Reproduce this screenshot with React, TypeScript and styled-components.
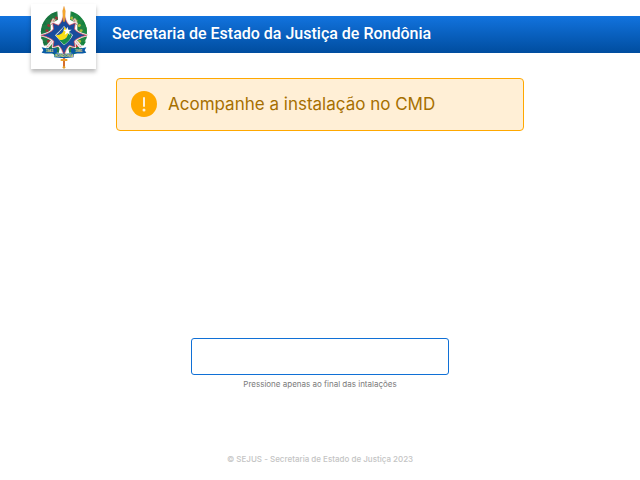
import React from "react";
import styled, { createGlobalStyle } from "styled-components";

const GlobalStyle = createGlobalStyle`
  *, *::before, *::after { box-sizing: border-box; }
  body { margin: 0; background: #fff; }
`;

const Page = styled.div`
  display: flex;
  flex-direction: column;
  min-height: 100vh;
  padding: 16px 0;
  font-family: Inter, sans-serif;
`;

const Header = styled.header`
  display: flex;
  align-items: center;
  gap: 16px;
  height: 37px;
  padding-left: 31px;
  background: linear-gradient(#1273de, #004d9f);
`;

const LogoCard = styled.div`
  display: flex;
  flex: none;
  align-items: center;
  justify-content: center;
  width: 65px;
  height: 65px;
  margin: -14px 0 -18px;
  background: #fff;
  box-shadow: 0 3px 4px rgba(0, 0, 0, 0.28);
`;

const Title = styled.h1`
  margin: 0;
  padding-bottom: 2px;
  color: #fff;
  font: 500 16px/20px Roboto, sans-serif;
`;

const Main = styled.main`
  display: flex;
  flex: 1;
  flex-direction: column;
  align-items: center;
  justify-content: space-between;
  padding: 25px 116px 0;
`;

const Alert = styled.div`
  display: flex;
  align-items: center;
  gap: 11px;
  align-self: stretch;
  min-height: 53px;
  padding: 0 14px 1px;
  border: 1px solid #ffa800;
  border-radius: 4px;
  background: #ffefd6;
  color: #a66f00;
  font: 400 17px/24px Inter, sans-serif;
`;

const Action = styled.div`
  display: flex;
  flex-direction: column;
  align-items: center;
  gap: 4px;
`;

const ActionButton = styled.button`
  width: 258px;
  height: 37px;
  border: 1px solid #1070d6;
  border-radius: 3px;
  background: #fff;
  cursor: pointer;
`;

const Hint = styled.p`
  margin: 0;
  color: #7b7b7b;
  font-size: 8px;
  line-height: 10px;
`;

const Footer = styled.footer`
  padding-top: 65px;
  color: #c4c4c4;
  font-size: 8px;
  font-weight: 500;
  line-height: 10px;
  text-align: center;
`;

const WarningIcon = () => (
  <svg width="26" height="26" viewBox="0 0 26 26" aria-hidden="true">
    <circle cx="13" cy="13" r="13" fill="#ffa800" />
    <path d="M13 7v8" stroke="#ffefd6" strokeWidth="2" strokeLinecap="round" />
    <circle cx="13" cy="19" r="1.5" fill="#ffefd6" />
  </svg>
);

const leafAngles = [-64, -46, -28, -10, 8, 26, 44, 62];

const Crest = () => (
  <svg width="50" height="64" viewBox="0 0 150 192" role="img" aria-label="Brasão de Rondônia">
    <g transform="translate(75 86)">
      <path d="M-20-67C-48-60-70-34-69-3C-68 28-48 52-16 58L-10 30L-40 8V-30L-18-42Z" fill="#217943" />
      <path d="M20-67C48-60 70-34 69-3C68 28 48 52 16 58L10 30L40 8V-30L18-42Z" fill="#218543" />
      {leafAngles.map((a) => (
        <g key={a}>
          <g transform={`rotate(${a})`}>
            <path d="M59 0L70-8L68 7Z" fill="#12833d" />
            <ellipse cx="52" cy="0" rx="5" ry="4" fill={a > 30 ? "#d32932" : "#aebd3c"} />
          </g>
          <g transform={`rotate(${180 - a})`}>
            <path d="M59 0L70-8L68 7Z" fill="#17733f" />
            <ellipse cx="52" cy="0" rx="5" ry="4" fill={a > 30 ? "#408448" : "#9b3435"} />
          </g>
        </g>
      ))}
      <path d="M-38-27L-29-45M38-27L29-45" stroke="#d9c9b5" strokeWidth="10" />
      <path d="M-37-26L-28-44M37-26L28-44" stroke="#a67366" strokeWidth="4" strokeDasharray="3 3" />
      <path d="M-52 42L-26 12M52 42L26 12" stroke="#f1ebe8" strokeWidth="10" />
      <path d="M-50 40L-27 12M50 40L27 12" stroke="#d85360" strokeWidth="2" strokeDasharray="4 3" />
    </g>
    <path
      d="M75 27C79 45 84 55 92 61L109 54L106 72C112 80 125 87 143 91C125 95 112 101 105 109L108 126L91 121C84 128 79 136 75 151C71 136 66 128 59 121L42 126L45 109C38 101 25 95 7 91C25 87 38 80 44 72L41 54L58 61C66 55 71 45 75 27Z"
      fill="#174c9c"
      stroke="#f3f1f3"
      strokeWidth="7"
      strokeLinejoin="round"
    />
    <path
      d="M75 27C79 45 84 55 92 61L109 54L106 72C112 80 125 87 143 91C125 95 112 101 105 109L108 126L91 121C84 128 79 136 75 151C71 136 66 128 59 121L42 126L45 109C38 101 25 95 7 91C25 87 38 80 44 72L41 54L58 61C66 55 71 45 75 27Z"
      fill="#174c9c"
      stroke="#d43542"
      strokeWidth="2"
      strokeLinejoin="round"
    />
    <path d="M75 63C83 72 92 82 102 90C96 103 86 113 75 121C66 112 57 101 48 91C57 82 67 73 75 63Z" fill="#f3f1e5" />
    <path d="M75 65C83 74 91 82 99 90C93 102 85 111 75 118C67 110 59 101 51 91C59 83 67 75 75 65Z" fill="#1c55a4" />
    <path d="M51 91C69 89 76 80 75 65L87 77C91 94 78 108 62 105Z" fill="#f7df17" />
    <path d="M61 104C79 108 91 94 87 77L98 90C95 105 84 113 75 119Z" fill="#18904b" />
    <path d="M52 91C67 93 79 85 80 71L86 77C88 94 73 103 60 101Z" fill="#f7df17" />
    <path d="M85 65L88 74L98 74L90 80L93 90L85 84L77 90L80 80L72 74L82 74Z" fill="#fff" />
    <path d="M75 4L79 18L77 50H73L71 18Z" fill="#f6a11d" stroke="#d98429" />
    <path d="M75 16V47" stroke="#ffd779" strokeWidth="1" />
    <path d="M8 127Q31 134 54 129V143Q31 148 8 143L13 136Z" fill="#095aa5" />
    <path d="M142 127Q119 134 96 129V143Q119 148 142 143L137 136Z" fill="#095aa5" />
    <path d="M46 144Q75 149 104 144V157Q75 162 46 157Z" fill="#075ba5" />
    <g fill="#f3e36a" fontFamily="Liberation Sans, sans-serif" fontWeight="700" textAnchor="middle">
      <text x="31" y="142" fontSize="10">1943</text>
      <text x="119" y="142" fontSize="10">1981</text>
      <text x="75" y="156" fontSize="10">RONDÔNIA</text>
    </g>
    <path d="M75 160V188" stroke="#c9432b" strokeWidth="6" />
    <path d="M65 165H85" stroke="#e7a12e" strokeWidth="6" />
    <path d="M75 168V184" stroke="#e19a2d" strokeWidth="3" />
    <circle cx="75" cy="187" r="4" fill="#e4a02d" />
  </svg>
);

export default function App() {
  return (
    <>
      <GlobalStyle />
      <Page>
        <Header>
          <LogoCard><Crest /></LogoCard>
          <Title>Secretaria de Estado da Justiça de Rondônia</Title>
        </Header>
        <Main>
          <Alert role="alert"><WarningIcon /><span>Acompanhe a instalação no CMD</span></Alert>
          <Action>
            <ActionButton type="button" aria-labelledby="action-hint" />
            <Hint id="action-hint">Pressione apenas ao final das intalações</Hint>
          </Action>
        </Main>
        <Footer>© SEJUS - Secretaria de Estado de Justiça 2023</Footer>
      </Page>
    </>
  );
}
